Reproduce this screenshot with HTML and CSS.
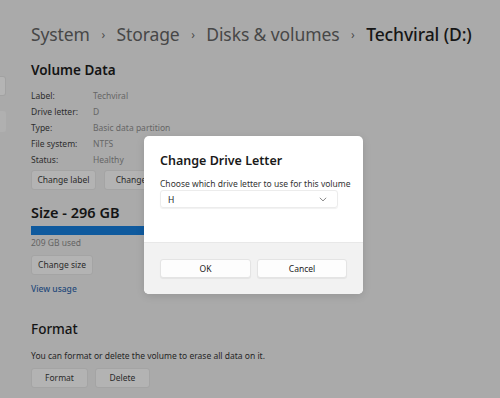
FILE: index.html
```html
<!DOCTYPE html>
<html lang="en">
<head>
<meta charset="utf-8">
<title>Techviral (D:)</title>
<link rel="stylesheet" href="styles.css">
</head>
<body>
<div class="app">
  <aside class="nav">
    <div class="nav-item nav-item-a"></div>
    <div class="nav-item nav-item-b"></div>
  </aside>
  <main class="content">
    <h1 class="crumbs"><span class="crumb">System</span><span class="sep">›</span><span class="crumb">Storage</span><span class="sep">›</span><span class="crumb">Disks &amp; volumes</span><span class="sep">›</span><span class="crumb current">Techviral (D:)</span></h1>

    <h2 class="section-title">Volume Data</h2>
    <dl class="props">
      <dt>Label:</dt><dd>Techviral</dd>
      <dt>Drive letter:</dt><dd>D</dd>
      <dt>Type:</dt><dd>Basic data partition</dd>
      <dt>File system:</dt><dd>NTFS</dd>
      <dt>Status:</dt><dd>Healthy</dd>
    </dl>
    <div class="btn-row">
      <button class="btn w-label">Change label</button>
      <button class="btn w-letter">Change drive letter</button>
    </div>

    <h2 class="section-title size-title">Size - 296 GB</h2>
    <div class="usage-bar"><div class="usage-fill" style="width:70.6%"></div></div>
    <div class="usage-text">209 GB used</div>
    <div class="btn-row">
      <button class="btn w-size">Change size</button>
    </div>
    <a class="link" href="#">View usage</a>

    <h2 class="section-title format-title">Format</h2>
    <p class="desc">You can format or delete the volume to erase all data on it.</p>
    <div class="btn-row">
      <button class="btn w-format">Format</button>
      <button class="btn w-delete">Delete</button>
    </div>
  </main>
</div>

<div class="dialog" role="dialog" aria-labelledby="dlg-title">
  <div class="dialog-body">
    <h3 class="dialog-title" id="dlg-title">Change Drive Letter</h3>
    <div class="dialog-label">Choose which drive letter to use for this volume</div>
    <div class="select">
      <span>H</span>
      <svg class="chev" width="8" height="5" viewBox="0 0 8 5"><path d="M0.8 0.8 L4 3.9 L7.2 0.8" fill="none" stroke="#7a7a7a" stroke-width="0.9"/></svg>
    </div>
  </div>
  <div class="dialog-footer">
    <button class="dbtn">OK</button>
    <button class="dbtn">Cancel</button>
  </div>
</div>
</body>
</html>
```

FILE: styles.css
```css
* { box-sizing: border-box; }
html, body {
  margin: 0;
  padding: 0;
  width: 500px;
  height: 398px;
  overflow: hidden;
  background: #aaaaaa;
  font-family: "Noto Sans", "Open Sans", sans-serif;
  color: #1e1e1e;
}
.app {
  display: flex;
  height: 398px;
}
.nav {
  width: 31px;
  flex: none;
  padding-top: 76px;
  display: flex;
  flex-direction: column;
  gap: 15px;
}
.nav-item {
  width: 6px;
  height: 20px;
  border-radius: 0 3px 3px 0;
}
.nav-item-a {
  background: #b4b4b4;
  border: 1px solid #a2a2a2;
  border-left: none;
}
.nav-item-b {
  background: #b0b0b0;
  height: 21px;
}
.content {
  flex: 1;
  min-width: 0;
}
.crumbs {
  margin: 21px 0 0;
  font-size: 17.5px;
  font-weight: 400;
  line-height: 26px;
  white-space: nowrap;
  color: #474747;
  letter-spacing: -0.1px;
}
.sep {
  display: inline-block;
  font-size: 12px;
  margin: 0 11.5px;
  color: #4a4a4a;
  vertical-align: 2px;
}
.crumb.current {
  color: #161616;
  font-weight: 500;
}
.section-title {
  margin: 0;
  font-size: 13.5px;
  font-weight: 600;
  line-height: 18px;
  color: #141414;
}
.crumbs + .section-title {
  margin-top: 13px;
}
.props {
  margin: 9px 0 0;
  display: grid;
  grid-template-columns: 62px auto;
  grid-auto-rows: 16px;
  font-size: 8.5px;
  line-height: 16px;
}
.props dt { color: #2d2d2d; }
.props dd { margin: 0; color: #666; }
.btn-row {
  display: flex;
  gap: 8px;
}
.props + .btn-row { margin-top: 2px; }
.btn {
  height: 20px;
  padding: 0;
  border: 1px solid #a4a4a4;
  border-radius: 3px;
  background: #b3b3b3;
  color: #2a2a2a;
  font-family: inherit;
  font-size: 8.5px;
  line-height: 18px;
}
.w-label { width: 65px; }
.w-letter { width: 100px; }
.w-size { width: 62px; }
.w-format { width: 57px; }
.w-delete { width: 55px; margin-left: -1px; }
.size-title {
  margin-top: 13px;
  font-size: 14.5px;
}
.usage-bar {
  margin-top: 5px;
  height: 9px;
  width: 300px;
  background: #bcbcbc;
}
.usage-fill {
  height: 100%;
  background: #0f5a9e;
}
.usage-text {
  margin-top: 1px;
  font-size: 8.5px;
  line-height: 14px;
  color: #646464;
}
.usage-text + .btn-row { margin-top: 5px; }
.link {
  display: block;
  margin-top: 8px;
  font-size: 8.5px;
  line-height: 12px;
  color: #24497a;
  text-decoration: none;
  font-weight: 500;
}
.format-title {
  margin-top: 25px;
  font-weight: 500;
  font-size: 13.5px;
}
.desc {
  margin: 12px 0 0;
  font-size: 8.5px;
  line-height: 12px;
  color: #262626;
}
.desc + .btn-row { margin-top: 6px; }

/* dialog */
.dialog {
  position: absolute;
  left: 144px;
  top: 136px;
  width: 219px;
  height: 158px;
  background: #ffffff;
  border-radius: 5px;
  overflow: hidden;
  display: flex;
  flex-direction: column;
  box-shadow: 0 2px 8px rgba(0,0,0,0.12);
}
.dialog-body {
  height: 106px;
  padding: 16px 16px 0;
}
.dialog-title {
  margin: 0;
  font-size: 12.5px;
  font-weight: 600;
  line-height: 18px;
  color: #1a1a1a;
}
.dialog-label {
  margin-top: 9px;
  font-size: 8.5px;
  line-height: 10px;
  color: #333;
  white-space: nowrap;
}
.select {
  margin-top: 1px;
  width: 178px;
  height: 18px;
  border: 1px solid #ececec;
  border-radius: 3px;
  box-shadow: 0 1px 1px rgba(0,0,0,0.06);
  display: flex;
  align-items: center;
  justify-content: space-between;
  padding: 0 10px 0 7px;
  font-size: 8.5px;
  color: #222;
}
.dialog-footer {
  flex: 1;
  background: #f2f2f2;
  border-top: 1px solid #e8e8e8;
  display: flex;
  gap: 6px;
  padding: 16px 0 0 16px;
}
.dbtn {
  width: 91px;
  height: 19px;
  padding: 0;
  border: 1px solid #e4e4e4;
  border-radius: 3px;
  background: #fdfdfd;
  box-shadow: 0 1px 1px rgba(0,0,0,0.06);
  font-family: inherit;
  font-size: 8.5px;
  color: #222;
}
.dbtn + .dbtn { width: 90px; }
```
